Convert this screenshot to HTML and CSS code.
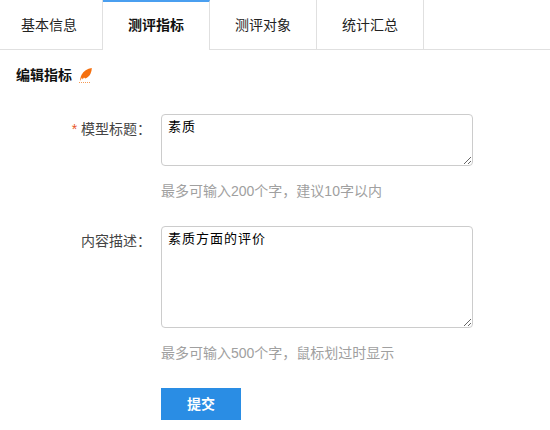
FILE: index.html
```html
<html>
<head>
<meta charset="utf-8">
<link rel="stylesheet" href="styles.css">
</head>

<body>
<div class="tabs">
  <div class="tab">基本信息</div>
  <div class="tab active">测评指标</div>
  <div class="tab">测评对象</div>
  <div class="tab">统计汇总</div>
</div>

<div class="section-title">
  <span>编辑指标</span>
  <svg class="feather" width="13" height="15" viewBox="0 0 13 15">
    <path d="M12.8 0C8.4 .8 4.4 3 2.6 6.8 1.6 9 1.1 11 1 13L3 9.6 3.5 11.4 5 9.6 6.2 10.6C8.6 9.8 10.6 8 11.6 5.6 12.4 3.8 12.8 1.8 12.8 0Z" fill="#f5700f"/>
    <path d="M0 14.5H11" stroke="#f59a55" stroke-width="1" stroke-dasharray="1 1"/>
  </svg>
</div>

<div class="form">
  <div class="row">
    <label class="label"><span class="req">*</span> 模型标题：</label>
    <div class="field">
      <textarea class="input short">素质</textarea>
      <div class="hint">最多可输入200个字，建议10字以内</div>
    </div>
  </div>
  <div class="row">
    <label class="label">内容描述：</label>
    <div class="field">
      <textarea class="input tall">素质方面的评价</textarea>
      <div class="hint">最多可输入500个字，鼠标划过时显示</div>
    </div>
  </div>
  <div class="row">
    <div class="label"></div>
    <div class="field">
      <button class="submit">提交</button>
    </div>
  </div>
</div>
</body>
</html>
```

FILE: styles.css
```css
html{
  overflow: hidden;
}

body{
  margin: 0;
  background: #fff;
  color: #333;
  font-family: "Liberation Sans", "Noto Sans CJK SC", sans-serif;
  font-size: 14px;
}

.tabs{
  display: flex;
  height: 49px;
  margin-left: -4px;
  border-bottom: 1px solid #e0e0e0;
}

.tab{
  box-sizing: border-box;
  width: 107px;
  height: 49px;
  padding-top: 2px;
  line-height: 47px;
  text-align: center;
  color: #222;
  border-right: 1px solid #e0e0e0;
}

.tab.active{
  height: 50px;
  margin-bottom: -1px;
  background: #fff;
  border-top: 2px solid #4a9ff0;
  padding-top: 0;
  color: #111;
  font-weight: bold;
}

.section-title{
  display: flex;
  align-items: center;
  gap: 7px;
  height: 48px;
  padding-left: 16px;
  font-size: 14px;
  font-weight: bold;
  color: #111;
}

.feather{
  margin-top: 3px;
}

.form{
  padding-top: 16px;
}

.row{
  display: flex;
}

.label{
  width: 151px;
  margin-right: 10px;
  padding-top: 7px;
  text-align: right;
  font-size: 14px;
  line-height: 16px;
  color: #444;
  white-space: nowrap;
}

.req{
  color: #e8562a;
}

.input{
  display: block;
  box-sizing: border-box;
  width: 312px;
  padding: 4px 6px;
  border: 1px solid #ccc;
  border-radius: 4px;
  font-family: "Liberation Sans", "Noto Sans CJK SC", sans-serif;
  font-size: 13px;
  letter-spacing: 1px;
  line-height: 16px;
  color: #000;
  background: #fff;
}

.short{
  height: 52px;
}

.tall{
  height: 102px;
}

.hint{
  height: 60px;
  padding-top: 16px;
  box-sizing: border-box;
  font-size: 14px;
  line-height: 18px;
  color: #a0a0a0;
}

.submit{
  display: block;
  width: 80px;
  height: 32px;
  padding: 0 0 2px;
  border: 0;
  background: #2a8de4;
  color: #fff;
  font-family: "Liberation Sans", "Noto Sans CJK SC", sans-serif;
  font-size: 14px;
  font-weight: bold;
}
```
